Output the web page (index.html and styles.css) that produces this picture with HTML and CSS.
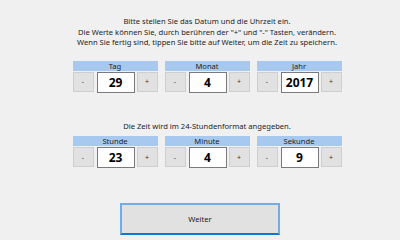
FILE: index.html
```html
<!DOCTYPE html>
<html lang="de">
<head>
    <meta charset="UTF-8">
    <title>Datum und Uhrzeit</title>
    <link rel="stylesheet" href="styles.css">
</head>
<body>
    <div class="page">
        <div class="content">
            <p class="intro">
                Bitte stellen Sie das Datum und die Uhrzeit ein.<br>
                Die Werte können Sie, durch berühren der "+" und "-" Tasten, verändern.<br>
                Wenn Sie fertig sind, tippen Sie bitte auf Weiter, um die Zeit zu speichern.
            </p>

            <div class="fields date">
                <div class="field">
                    <div class="label">Tag</div>
                    <div class="controls">
                        <button class="step">-</button>
                        <div class="value">29</div>
                        <button class="step">+</button>
                    </div>
                </div>
                <div class="field">
                    <div class="label">Monat</div>
                    <div class="controls">
                        <button class="step">-</button>
                        <div class="value">4</div>
                        <button class="step">+</button>
                    </div>
                </div>
                <div class="field">
                    <div class="label">Jahr</div>
                    <div class="controls">
                        <button class="step">-</button>
                        <div class="value">2017</div>
                        <button class="step">+</button>
                    </div>
                </div>
            </div>

            <p class="note">Die Zeit wird im 24-Stundenformat angegeben.</p>

            <div class="fields time">
                <div class="field">
                    <div class="label">Stunde</div>
                    <div class="controls">
                        <button class="step">-</button>
                        <div class="value">23</div>
                        <button class="step">+</button>
                    </div>
                </div>
                <div class="field">
                    <div class="label">Minute</div>
                    <div class="controls">
                        <button class="step">-</button>
                        <div class="value">4</div>
                        <button class="step">+</button>
                    </div>
                </div>
                <div class="field">
                    <div class="label">Sekunde</div>
                    <div class="controls">
                        <button class="step">-</button>
                        <div class="value">9</div>
                        <button class="step">+</button>
                    </div>
                </div>
            </div>
        </div>

        <div class="actions">
            <button class="next">Weiter</button>
        </div>
    </div>
</body>
</html>
```

FILE: styles.css
```css
html, body {
    margin: 0;
    padding: 0;
    background: #f0f0f0;
}
body {
    font-family: "Noto Sans", "Open Sans", sans-serif;
    color: #1e1e1e;
    width: 400px;
    height: 240px;
    overflow: hidden;
}
.page {
    padding-top: 16px;
}
.content {
    padding-left: 14px;
    text-align: center;
}
.intro,
.note {
    margin: 0;
    font-size: 7.6px;
    line-height: 10.5px;
}
.fields {
    display: flex;
    justify-content: center;
    gap: 7px;
}
.fields.date {
    margin-top: 13px;
}
.note {
    margin-top: 28px;
}
.fields.time {
    margin-top: 5px;
}
.field {
    width: 85px;
}
.label {
    height: 10px;
    line-height: 10px;
    background: #a7c9ef;
    font-size: 7.6px;
    color: #222;
}
.controls {
    display: flex;
    align-items: flex-start;
    margin-top: 1px;
}
.step {
    width: 21px;
    height: 20px;
    padding: 0;
    border: 1px solid #cfcfcf;
    background: #e1e1e1;
    font-family: inherit;
    font-size: 7px;
    color: #333;
}
.value {
    width: 38px;
    height: 21px;
    margin-left: 3px;
    margin-right: 2px;
    box-sizing: border-box;
    border: 1px solid #7a7a7a;
    background: white;
    font-size: 12px;
    font-weight: bold;
    line-height: 19px;
    color: #000;
}
.actions {
    display: flex;
    justify-content: center;
    margin-top: 35px;
}
.next {
    width: 160px;
    height: 32px;
    box-sizing: border-box;
    border: 2px solid #72ade6;
    border-bottom-color: #0a78d4;
    background: #e1e1e1;
    font-family: inherit;
    font-size: 7.6px;
    color: #222;
}
```
